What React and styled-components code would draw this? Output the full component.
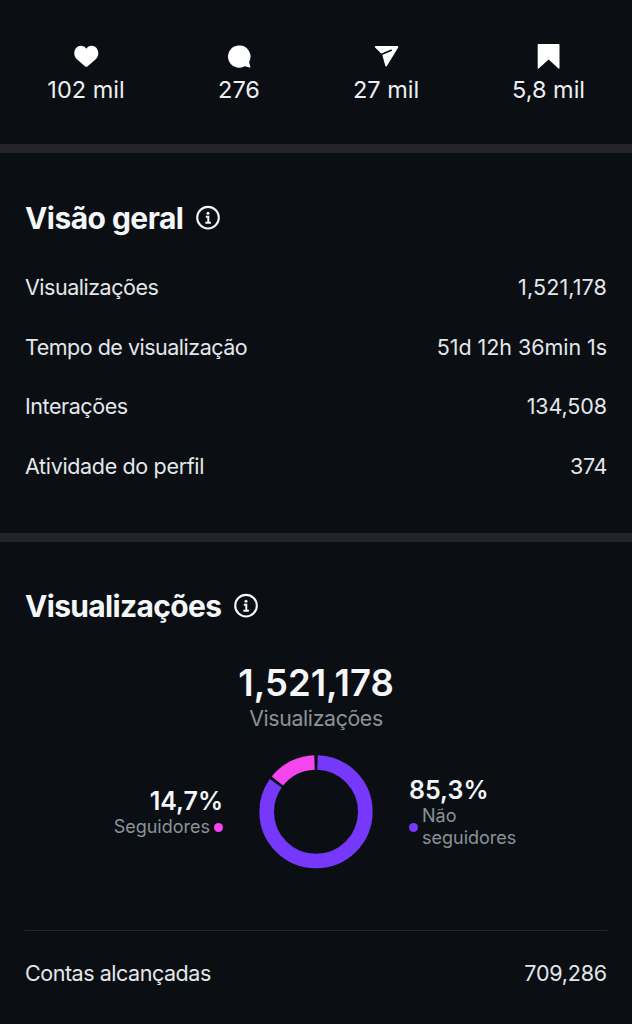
import React from "react";
import styled, { createGlobalStyle } from "styled-components";

const Global = createGlobalStyle`
  * { box-sizing: border-box; }
  body { margin: 0; background: #0b0f14; }
`;
const Page = styled.main`
  width: 632px; height: 1024px; overflow: hidden; background: #0b0f14; color: #f4f6f8;
  font-family: Inter, "Liberation Sans", sans-serif; display: flex; flex-direction: column;
`;
const Stats = styled.section`
  height: 153px; flex: none; padding: 43px 0 0 47px; border-bottom: 9px solid #242328;
  display: flex;
`;
const Stat = styled.div`
  width: ${(p) => p.$w}px; margin-right: ${(p) => p.$gap}px; flex: none;
  display: flex; flex-direction: column; align-items: center;
  font-size: 23.5px; line-height: 30px; white-space: nowrap; color: #eceef0;
  svg { height: 27px; width: 27px; margin-bottom: 5px; flex: none; }
`;
const Text = styled.span`
  display: inline-block; white-space: nowrap; letter-spacing: ${(p) => p.$ls || 0}px;
`;
const Overview = styled.section`
  height: 389px; flex: none; padding: 47px 25px 0; border-bottom: 9px solid #242328;
`;
const Views = styled.section`
  padding: 46px 25px 0;
`;
const Heading = styled.h2`
  margin: 0; height: 36px; display: flex; align-items: center; gap: 12px;
  font-size: 30px; line-height: 36px; font-weight: 700;
`;
const Rows = styled.div`
  padding-top: 21px;
`;
const Row = styled.div`
  height: 59.7px; display: flex; align-items: center; justify-content: space-between;
  font-size: 21.5px; line-height: 28px; color: #e4e7ea;
`;
const Total = styled.div`
  margin-top: 36px; text-align: center; font-size: 36.5px; line-height: 46px; font-weight: 600;
`;
const Caption = styled.div`
  text-align: center; font-size: 21.3px; line-height: 24px; color: #8b9299; letter-spacing: -0.36px;
`;
const Breakdown = styled.div`
  display: flex; margin-top: 23px; height: 118px;
`;
const Followers = styled.div`
  width: 198px; padding-top: 34px; text-align: right;
`;
const Donut = styled.svg`
  width: 118px; height: 118px; margin: 0 34px; flex: none;
`;
const Others = styled.div`
  padding-top: 23px;
`;
const Percent = styled.div`
  font-size: 25px; line-height: 28px; font-weight: 600;
`;
const Legend = styled.div`
  margin-top: 1px;
  display: flex; align-items: center; justify-content: ${(p) => (p.$end ? "flex-end" : "flex-start")};
  gap: 4px; font-size: 18px; line-height: 22px; color: #8b9299;
`;
const Dot = styled.i`
  width: 9px; height: 9px; border-radius: 50%; background: ${(p) => p.$color};
`;
const Reached = styled(Row)`
  margin-top: 59px; height: 85px; border-top: 1px solid #23272d;
`;

const Info = () => (
  <svg width="26" height="26" viewBox="0 0 26 26" fill="none" stroke="#f4f6f8">
    <circle cx="13" cy="12.7" r="10.8" strokeWidth="2.1" />
    <circle cx="13" cy="8.2" r="1.5" fill="#f4f6f8" stroke="none" />
    <path d="M10.8 11.7h2.5v5.8M10.3 17.8h5.6" strokeWidth="2" />
  </svg>
);
const Heart = () => (
  <svg viewBox="0 0 27 27" fill="#fff"><path d="M11.9 23.2 3.9 16.2C2.2 14.6 1.3 12.7 1.3 10.2 1.3 5.9 4.3 2.8 8 2.8c2.3 0 4.1 1 5.3 2.9 1.2-1.9 3-2.9 5.3-2.9 3.7 0 6.7 3.1 6.7 7.4 0 2.5-.9 4.4-2.6 6l-8 7q-1.4 1.2-2.8 0Z" /></svg>
);
const Comment = () => (
  <svg viewBox="0 0 27 27" fill="#fff"><path d="M13.2 2.5a11.1 11.1 0 1 0 5.5 20.7l5.3 1.3q.6.1.4-.6l-1.3-4.9A11.1 11.1 0 0 0 13.2 2.5Z" /></svg>
);
const Send = () => (
  <svg viewBox="0 0 27 27">
    <path fill="#fff" d="M2.7 3H24.3Q26 3 25.2 4.5L13.9 22.9Q12.7 24.3 12.2 22.6L9.2 11.4 2.1 4.6Q1.2 3.4 2.7 3Z" />
    <path d="M8.3 11.6 18.2 7.3" fill="none" stroke="#0b0f14" strokeWidth="1.6" strokeLinecap="round" />
  </svg>
);
const Bookmark = () => (
  <svg viewBox="0 0 27 27" fill="#fff"><path d="M2.7 2Q2.7 1.1 3.6 1.1H23.6Q24.5 1.1 24.5 2V25.3Q24.3 26.1 23.5 25.5L13.6 16.6 3.7 25.5Q2.9 26.1 2.7 25.3Z" /></svg>
);

const stats = [
  { label: "102 mil", w: 78, gap: 93, Icon: Heart },
  { label: "276", w: 42, gap: 93, Icon: Comment },
  { label: "27 mil", w: 66, gap: 93, Icon: Send },
  { label: "5,8 mil", w: 73, gap: 0, Icon: Bookmark },
];
const rows = [
  ["Visualizações", "1,521,178", -0.48, 0.12],
  ["Tempo de visualização", "51d 12h 36min 1s", -0.5, -0.06],
  ["Interações", "134,508", -0.44, -0.1],
  ["Atividade do perfil", "374", -0.34, -0.4],
];

export default function App() {
  return (
    <Page>
      <Global />
      <Stats>
        {stats.map(({ label, w, gap, Icon }) => (
          <Stat key={label} $w={w} $gap={gap}><Icon /><Text>{label}</Text></Stat>
        ))}
      </Stats>
      <Overview>
        <Heading><Text $ls={-0.55}>Visão geral</Text><Info /></Heading>
        <Rows>
          {rows.map(([a, b, la, lb]) => <Row key={a}><Text $ls={la}>{a}</Text><Text $ls={lb}>{b}</Text></Row>)}
        </Rows>
      </Overview>
      <Views>
        <Heading><Text $ls={-0.67}>Visualizações</Text><Info /></Heading>
        <Total>1,521,178</Total>
        <Caption>Visualizações</Caption>
        <Breakdown>
          <Followers>
            <Percent>14,7%</Percent>
            <Legend $end>Seguidores<Dot $color="#f545ef" /></Legend>
          </Followers>
          <Donut viewBox="0 0 118 118" fill="none" strokeWidth="14.6">
            <circle cx="59" cy="58.7" r="49.3" stroke="#7638fa" pathLength="100" strokeDasharray="84.3 15.7" strokeDashoffset="-0.5" transform="rotate(-90 59 58.7)" />
            <circle cx="59" cy="58.7" r="49.3" stroke="#f545ef" pathLength="100" strokeDasharray="13.8 86.2" strokeDashoffset="-85.7" transform="rotate(-90 59 58.7)" />
          </Donut>
          <Others>
            <Percent>85,3%</Percent>
            <Legend><Dot $color="#7638fa" /><span>Não<br />seguidores</span></Legend>
          </Others>
        </Breakdown>
        <Reached><Text $ls={-0.46}>Contas alcançadas</Text><Text $ls={-0.2}>709,286</Text></Reached>
      </Views>
    </Page>
  );
}
